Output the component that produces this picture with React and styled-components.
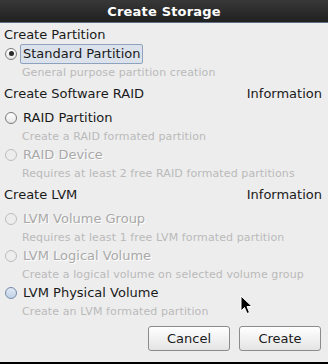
import React from 'react';
import styled, { createGlobalStyle, css } from 'styled-components';

const GlobalStyle = createGlobalStyle`
  html, body {
    margin: 0;
    padding: 0;
    background: #ededed;
  }
  body {
    font-family: "DejaVu Sans", "Liberation Sans", sans-serif;
    overflow: hidden;
  }
`;

const Dialog = styled.div`
  position: relative;
  width: 328px;
  height: 364px;
  box-sizing: border-box;
  background: #ededed;
  border-bottom: 2px solid #000;
  display: flex;
  flex-direction: column;
`;

const TitleBar = styled.div`
  height: 22px;
  background: linear-gradient(#383838, #202020);
  border-bottom: 1px solid #5f6f86;
  display: flex;
  align-items: center;
  justify-content: center;
  color: #fff;
  font-weight: bold;
  font-size: 13px;
  letter-spacing: 0.2px;
`;

const Body = styled.div`
  display: flex;
  flex-direction: column;
  padding: 0 6px 0 4px;
`;

const SectionHeader = styled.div`
  height: 20px;
  margin-top: ${p => p.$top || 0}px;
  margin-bottom: ${p => p.$bottom || 0}px;
  display: flex;
  align-items: center;
  justify-content: space-between;
  font-size: 13px;
  color: #1a1a1a;
`;

const OptionRow = styled.div`
  height: 19px;
  display: flex;
  align-items: center;
  gap: 6px;
  font-size: 13px;
`;

const Radio = styled.span`
  width: 12px;
  height: 12px;
  border-radius: 50%;
  box-sizing: border-box;
  display: flex;
  align-items: center;
  justify-content: center;
  border: 1px solid #7b7b7b;
  background: linear-gradient(#ffffff, #e6e6e6);
  margin-left: 1px;

  ${p => p.$checked && css`
    &::after {
      content: '';
      width: 5px;
      height: 5px;
      border-radius: 50%;
      background: #2a2a2a;
    }
  `}

  ${p => p.$hover && css`
    border-color: #7489a8;
    background: linear-gradient(#dfe8f5, #c3d2e8);
  `}

  ${p => p.$disabled && css`
    border-color: #bdbdbd;
    background: #ededed;
  `}
`;

const Label = styled.span`
  color: ${p => (p.$disabled ? '#a9a9a9' : '#1a1a1a')};
  text-shadow: ${p => (p.$disabled ? '1px 1px 0 #ffffff' : 'none')};
  line-height: 18px;
  padding: 0 2px;
  margin-left: -3px;
  border: 1px solid transparent;
  border-radius: 2px;

  ${p => p.$focused && css`
    background: #dbe2ec;
    border-color: #8fa2bd;
  `}
`;

const Desc = styled.div`
  height: 18px;
  display: flex;
  align-items: center;
  padding-left: 18px;
  font-size: 11px;
  letter-spacing: 0.1px;
  color: #bababa;
`;

const ButtonBar = styled.div`
  display: flex;
  justify-content: flex-end;
  gap: 9px;
  margin-top: 6px;
  padding-right: 1px;
`;

const Button = styled.button`
  width: 82px;
  height: 25px;
  border: 1px solid #8b8b8b;
  border-radius: 3px;
  background: linear-gradient(#ffffff, #e4e4e4);
  font-family: "DejaVu Sans", "Liberation Sans", sans-serif;
  font-size: 13px;
  color: #1a1a1a;
  padding: 0;
`;

const Cursor = styled.svg`
  position: absolute;
  left: 240px;
  top: 295px;
`;

const Option = ({ label, checked, hover, disabled, focused }) => (
  <OptionRow>
    <Radio $checked={checked} $hover={hover} $disabled={disabled} />
    <Label $disabled={disabled} $focused={focused}>{label}</Label>
  </OptionRow>
);

const App = () => (
  <>
    <GlobalStyle />
    <Dialog>
      <TitleBar>Create Storage</TitleBar>
      <Body>
        <SectionHeader $top={1}>Create Partition</SectionHeader>
        <Option label="Standard Partition" checked focused />
        <Desc>General purpose partition creation</Desc>

        <SectionHeader $top={2} $bottom={5}>
          <span>Create Software RAID</span>
          <span>Information</span>
        </SectionHeader>
        <Option label="RAID Partition" />
        <Desc>Create a RAID formated partition</Desc>
        <Option label="RAID Device" disabled />
        <Desc>Requires at least 2 free RAID formated partitions</Desc>

        <SectionHeader $top={2} $bottom={5}>
          <span>Create LVM</span>
          <span>Information</span>
        </SectionHeader>
        <Option label="LVM Volume Group" disabled />
        <Desc>Requires at least 1 free LVM formated partition</Desc>
        <Option label="LVM Logical Volume" disabled />
        <Desc>Create a logical volume on selected volume group</Desc>
        <Option label="LVM Physical Volume" hover />
        <Desc>Create an LVM formated partition</Desc>

        <ButtonBar>
          <Button>Cancel</Button>
          <Button>Create</Button>
        </ButtonBar>
      </Body>
      <Cursor width="13" height="20" viewBox="0 0 13 20">
        <path d="M1 1 L1 16 L4.5 12.5 L7 18.5 L9.5 17.5 L7 11.5 L12 11.5 Z" fill="#000" stroke="#fff" strokeWidth="1" />
      </Cursor>
    </Dialog>
  </>
);

export default App;
